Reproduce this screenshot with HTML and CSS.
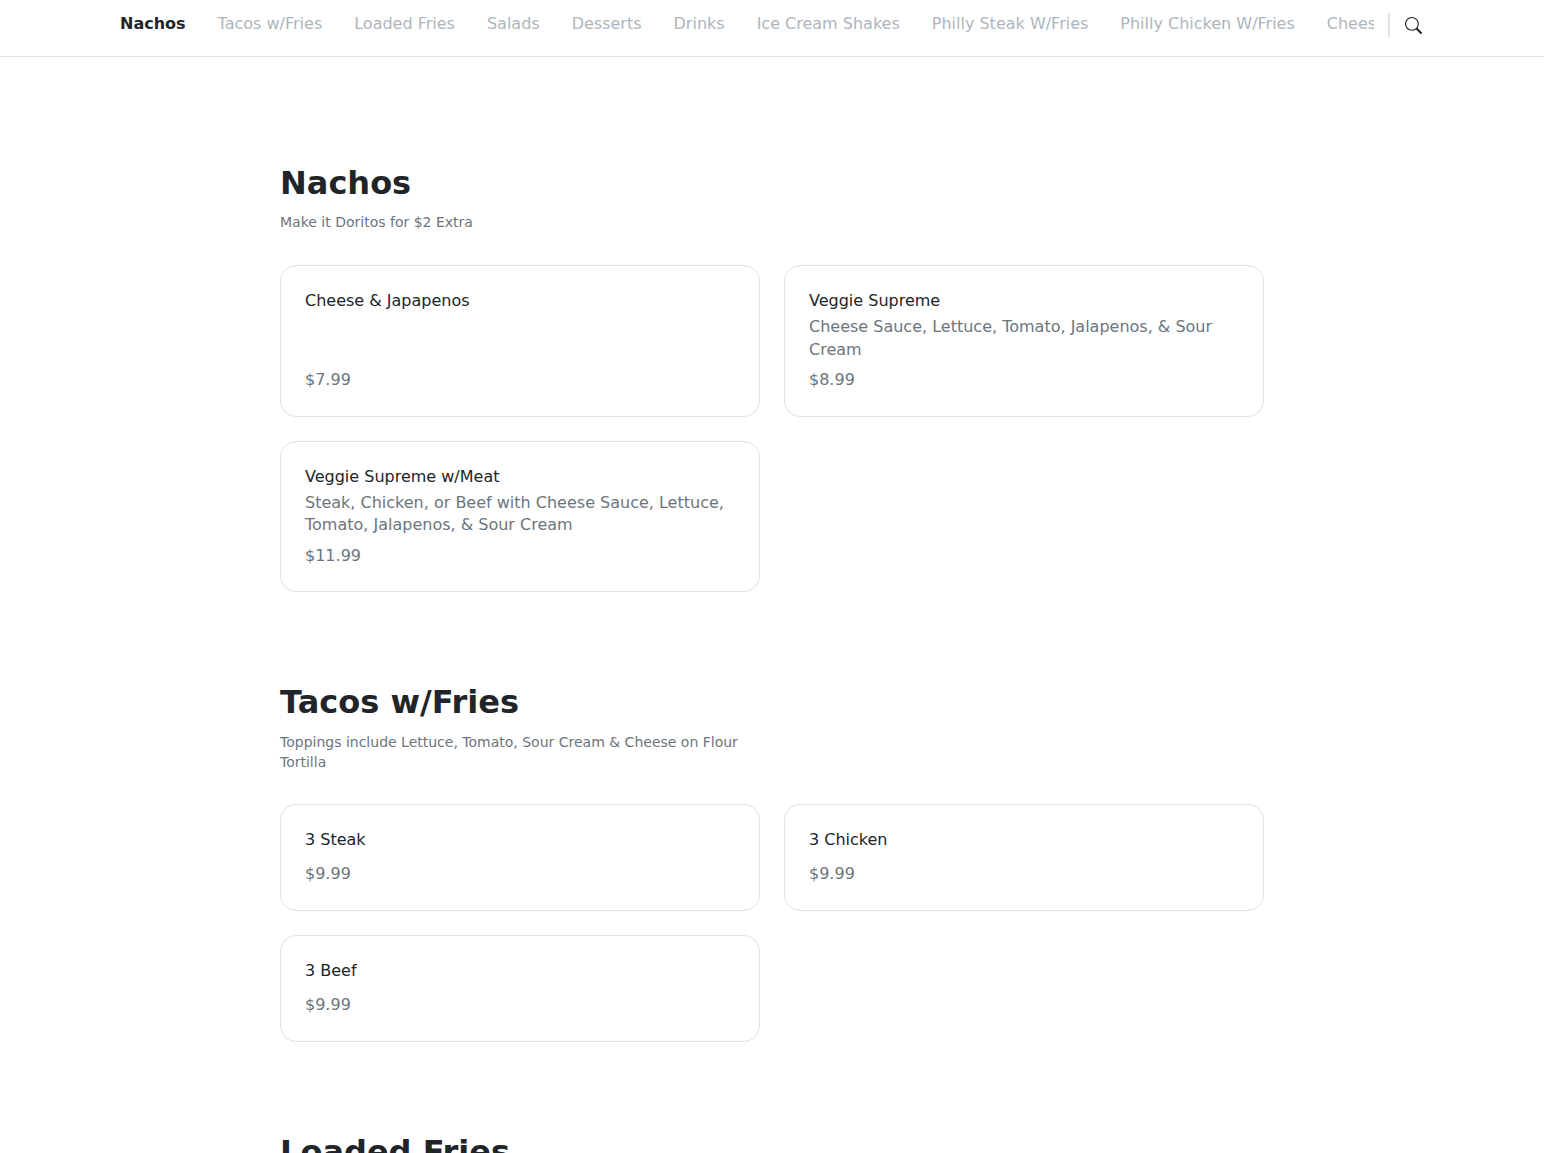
FILE: index.html
```html
<!DOCTYPE html>
<html lang="en">
<head>
<meta charset="utf-8">
<title>Menu</title>
<link rel="stylesheet" href="styles.css">
</head>
<body>
<header class="topbar">
  <nav class="cats">
    <a class="cat active">Nachos</a>
    <a class="cat">Tacos w/Fries</a>
    <a class="cat">Loaded Fries</a>
    <a class="cat">Salads</a>
    <a class="cat">Desserts</a>
    <a class="cat">Drinks</a>
    <a class="cat">Ice Cream Shakes</a>
    <a class="cat">Philly Steak W/Fries</a>
    <a class="cat">Philly Chicken W/Fries</a>
    <a class="cat">Cheesesteak Subs</a>
  </nav>
  <div class="search">
    <svg class="search-icon" viewBox="0 0 16 16" fill="currentColor"><path d="M11.742 10.344a6.5 6.5 0 1 0-1.397 1.398h-.001c.03.04.062.078.098.115l3.85 3.85a1 1 0 0 0 1.415-1.414l-3.85-3.85a1.007 1.007 0 0 0-.115-.1zM12 6.5a5.5 5.5 0 1 1-11 0 5.5 5.5 0 0 1 11 0z"/></svg>
  </div>
</header>
<main class="menu">
  <section class="section">
    <h2 class="title">Nachos</h2>
    <p class="sub">Make it Doritos for $2 Extra</p>
    <div class="grid">
      <article class="card"><h3 class="name">Cheese &amp; Japapenos</h3><p class="desc"></p><p class="price">$7.99</p></article>
      <article class="card"><h3 class="name">Veggie Supreme</h3><p class="desc">Cheese Sauce, Lettuce, Tomato, Jalapenos, &amp; Sour Cream</p><p class="price">$8.99</p></article>
      <article class="card"><h3 class="name">Veggie Supreme w/Meat</h3><p class="desc">Steak, Chicken, or Beef with Cheese Sauce, Lettuce, Tomato, Jalapenos, &amp; Sour Cream</p><p class="price">$11.99</p></article>
    </div>
  </section>
  <section class="section">
    <h2 class="title">Tacos w/Fries</h2>
    <p class="sub">Toppings include Lettuce, Tomato, Sour Cream &amp; Cheese on Flour Tortilla</p>
    <div class="grid">
      <article class="card"><h3 class="name">3 Steak</h3><p class="desc"></p><p class="price">$9.99</p></article>
      <article class="card"><h3 class="name">3 Chicken</h3><p class="desc"></p><p class="price">$9.99</p></article>
      <article class="card"><h3 class="name">3 Beef</h3><p class="desc"></p><p class="price">$9.99</p></article>
    </div>
  </section>
  <section class="section">
    <h2 class="title">Loaded Fries</h2>
  </section>
</main>
</body>
</html>
```
FILE: styles.css
```css
* { box-sizing: border-box; }
html, body { margin: 0; padding: 0; height: 1153px; overflow: hidden; background: #fff; }
body { font-family: "DejaVu Sans", sans-serif; color: #212529; font-size: 16px; }

.topbar {
  display: flex;
  align-items: center;
  height: 57px;
  padding: 0 120px 8px;
  border-bottom: 1px solid #dee2e6;
  background: #fff;
}
.cats {
  display: flex;
  gap: 32px;
  width: 1254px;
  overflow: hidden;
  white-space: nowrap;
}
.cat { color: #adb5bd; line-height: 24px; flex: none; }
.cat.active { color: #212529; font-weight: 700; }
.search {
  flex: none;
  margin-left: 14px;
  padding-left: 15px;
  height: 24px;
  border-left: 2px solid #dee2e6;
  display: flex;
  align-items: center;
  margin-top: 1px;
}
.search-icon { width: 17px; height: 17px; display: block; margin-top: 2px; }

.menu { width: 984px; margin: 0 auto; padding-top: 107px; }
.section { margin-bottom: 91px; }
.title { margin: 0 0 10.45px; font-size: 32px; line-height: 38px; font-weight: 700; }
.sub { margin: 0 0 32.45px; width: 480px; font-size: 14px; line-height: 20px; color: #6c757d; }
.grid { display: grid; grid-template-columns: 480px 480px; gap: 24px; }
.card {
  display: flex;
  flex-direction: column;
  padding: 24px;
  border: 1px solid #dee2e6;
  border-radius: 16px;
  background: #fff;
}
.name { margin: 0 0 4px; font-size: 16px; font-weight: 400; line-height: 22.4px; color: #212529; }
.desc { margin: 0 0 8px; line-height: 22.4px; color: #6c757d; }
.price { margin: auto 0 0; line-height: 22.4px; color: #6c757d; }
```
